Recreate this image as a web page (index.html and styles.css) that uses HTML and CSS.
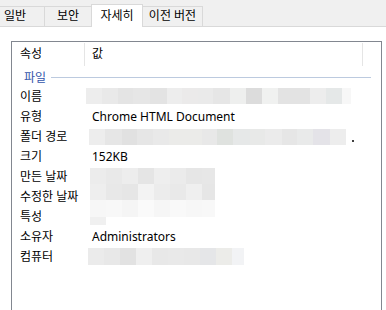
FILE: index.html
```html
<!DOCTYPE html>
<html lang="ko">
<head>
    <meta charset="UTF-8">
    <title>속성 - 자세히</title>
    <link rel="stylesheet" href="styles.css">
</head>
<body>
    <div class="tabs">
        <div class="tab first">일반</div>
        <div class="tab second">보안</div>
        <div class="tab active">자세히</div>
        <div class="tab last">이전 버전</div>
    </div>

    <div class="panel">
        <div class="list">
            <div class="head">
                <div class="hcol name">속성</div>
                <div class="hcol value">값</div>
            </div>
            <div class="group">
                <span>파일</span>
                <i class="rule"></i>
            </div>
            <div class="row">
                <div class="name">이름</div>
                <div class="value"><span class="redact r-name"></span></div>
            </div>
            <div class="row">
                <div class="name">유형</div>
                <div class="value">Chrome HTML Document</div>
            </div>
            <div class="row">
                <div class="name">폴더 경로</div>
                <div class="value"><span class="redact r-folder"></span><span class="dot"></span></div>
            </div>
            <div class="row">
                <div class="name">크기</div>
                <div class="value">152KB</div>
            </div>
            <div class="row">
                <div class="name">만든 날짜</div>
                <div class="value"><span class="redact r-dates"></span><span class="redact r-attr"></span></div>
            </div>
            <div class="row">
                <div class="name">수정한 날짜</div>
                <div class="value"></div>
            </div>
            <div class="row">
                <div class="name">특성</div>
                <div class="value"></div>
            </div>
            <div class="row">
                <div class="name">소유자</div>
                <div class="value">Administrators</div>
            </div>
            <div class="row">
                <div class="name">컴퓨터</div>
                <div class="value"><span class="redact r-computer"></span></div>
            </div>
        </div>
    </div>
</body>
</html>
```

FILE: styles.css
```css
html, body {
    margin: 0;
    padding: 0;
    background-color: #ffffff;
    overflow: hidden;
}

body {
    width: 386px;
    height: 310px;
    font-family: "Noto Sans", "Noto Sans CJK KR", sans-serif;
    font-size: 12px;
    color: #000000;
}

/* tab strip */
.tabs {
    display: flex;
    align-items: flex-end;
    height: 26px;
    background-color: #f0f0f0;
    border-bottom: 1px solid #d9d9d9;
}

.tab {
    box-sizing: border-box;
    height: 20px;
    line-height: 18px;
    text-align: center;
    border: 1px solid #d9d9d9;
    border-bottom: none;
    margin-right: -1px;
    color: #000000;
}

.tab.first {
    width: 60px;
    margin-left: -15px;
}

.tab.second {
    width: 48px;
}

.tab.active {
    position: relative;
    width: 52px;
    height: 23px;
    line-height: 21px;
    margin-bottom: -1px;
    background-color: #ffffff;
    z-index: 1;
}

.tab.last {
    width: 61px;
}

/* list view */
.panel {
    padding: 14px 5px 0 11px;
}

.list {
    width: 371px;
    height: 269px;
    box-sizing: border-box;
    border: 1px solid #828790;
    border-bottom: none;
}

.head {
    display: flex;
    height: 24px;
    line-height: 24px;
}

.hcol {
    box-sizing: border-box;
}

.hcol.name {
    width: 73px;
    padding-left: 8px;
    border-right: 1px solid #e5e5e5;
    margin-top: 1px;
    line-height: 22px;
}

.hcol.value {
    width: 278px;
    padding-left: 7px;
    border-right: 1px solid #e5e5e5;
    margin-top: 1px;
    line-height: 22px;
}

.group {
    display: flex;
    align-items: center;
    height: 21px;
    padding-left: 12px;
    color: #3355aa;
}

.group .rule {
    flex: 1;
    height: 1px;
    margin: 1px 10px 0 5px;
    background-color: #bccadf;
}

.row {
    display: flex;
    height: 20px;
    line-height: 20px;
}

.row .name {
    box-sizing: border-box;
    width: 73px;
    padding-left: 8px;
    white-space: nowrap;
}

.row .value {
    position: relative;
    flex: 1;
    padding-left: 7px;
    white-space: nowrap;
}

/* pixelated redactions over the hidden values */
.redact {
    position: absolute;
    display: block;
}

.r-name {
    left: 1px;
    top: 1px;
    width: 265px;
    height: 16px;
    background: linear-gradient(90deg,
        #ededed 0 16px, #e9e9e9 16px 32px, #e4e4e4 32px 47px, #e6e6e6 47px 64px,
        #e3e3e3 64px 81px, #ededed 81px 96px, #ebeaea 96px 112px, #eaeaea 112px 127px,
        #e6e6e6 127px 144px, #eeefee 144px 160px, #dcdcdc 160px 176px, #f0f1f0 176px 192px,
        #e3e3e3 192px 224px, #ededed 224px 240px, #e5e8e8 240px 256px, #f7f7f7 256px 265px);
}

.r-folder {
    left: 4px;
    top: 2px;
    width: 257px;
    height: 16px;
    background: linear-gradient(90deg,
        #ededed 0 16px, #e6e6e6 16px 33px, #e1e1e1 33px 48px, #e6e6e6 48px 64px,
        #e9e9e9 64px 80px, #ebebe9 80px 113px, #e8e8e8 113px 128px, #dfe2df 128px 144px,
        #e6e8e8 144px 161px, #e8e9e8 161px 176px, #ebebeb 176px 193px, #e6e6e6 193px 208px,
        #e9eaea 208px 224px, #e4e3e8 224px 241px, #ededed 241px 257px);
}

.dot {
    position: absolute;
    left: 267px;
    top: 13px;
    width: 2px;
    height: 2px;
    background-color: #404040;
}

.r-dates {
    left: 5px;
    top: 1px;
    width: 125px;
    height: 49px;
    background:
        linear-gradient(90deg,
            #ececec 0 16px, #e9e9e9 16px 32px, #ededed 32px 48px, #e5e5e5 48px 64px,
            #eeeeee 64px 80px, #ebebeb 80px 96px, #e6e6e6 96px 112px, #e7e7e7 112px 125px)
            0 0 / 125px 16px no-repeat,
        linear-gradient(90deg,
            #eeeeee 0 16px, #e8e8e8 16px 32px, #e6e6e6 32px 48px, #f3f3f3 48px 64px,
            #ececec 64px 80px, #e9e9e9 80px 96px, #efefef 96px 112px, #e6e6e6 112px 125px)
            0 16px / 125px 16px no-repeat,
        linear-gradient(90deg,
            #f7f7f7 0 16px, #f8f8f8 16px 32px, #f5f5f5 32px 48px, #fafafa 48px 64px,
            #f6f6f6 64px 80px, #f9f9f9 80px 96px, #f7f7f7 96px 112px, #f8f8f8 112px 125px)
            0 32px / 125px 17px no-repeat;
}

.r-attr {
    left: 5px;
    top: 50px;
    width: 16px;
    height: 8px;
    background-color: #f0f0f0;
}

.r-computer {
    left: 3px;
    top: 1px;
    width: 156px;
    height: 17px;
    background: linear-gradient(90deg,
        #ebebeb 0 16px, #e8e8e8 16px 32px, #e2e2e2 32px 48px, #efefef 48px 64px,
        #e8e8e8 64px 80px, #e9e9e9 80px 96px, #e8e8e8 96px 112px, #e5e6e8 112px 128px,
        #ecece9 128px 144px, #f2f3f5 144px 156px);
}
```
